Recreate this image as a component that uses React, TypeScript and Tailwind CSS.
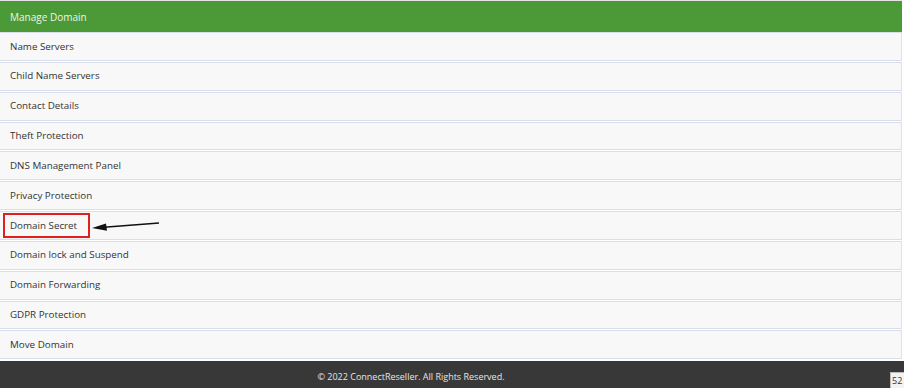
import React from "react";

const items = [
  "Name Servers",
  "Child Name Servers",
  "Contact Details",
  "Theft Protection",
  "DNS Management Panel",
  "Privacy Protection",
  "Domain Secret",
  "Domain lock and Suspend",
  "Domain Forwarding",
  "GDPR Protection",
  "Move Domain",
];

const Arrow = () => (
  <svg width="68" height="10" viewBox="0 0 68 10" className="ml-[2px] mt-[3px]">
    <line x1="12" y1="5.2" x2="67" y2="1" stroke="#111" strokeWidth="1.6" />
    <polygon points="0,6 14,1.5 15,8.8" fill="#111" />
  </svg>
);

export default function App() {
  return (
    <div
      className="w-[904px] h-[388px] overflow-hidden bg-white text-[#333] relative"
      style={{ fontFamily: '"Open Sans", "Noto Sans", sans-serif' }}
    >
      <div className="border-t border-[#e4e4e4] mr-[2px]">
        {/* header */}
        <div className="h-[31px] bg-[#4b9a37] text-[#eef5ea] text-[10px] flex items-center pl-[10px] pt-[1px]">
          Manage Domain
        </div>

        {/* list */}
        <ul>
          {items.map(label => {
            const marked = label === "Domain Secret";
            return (
              <li
                key={label}
                className="h-[28.85px] mb-[1px] bg-[#f8f8f8] border-t border-b border-[#d8dfea] border-r border-r-[#e2e2e2] flex items-center text-[9.8px] pt-[1px]"
              >
                {marked ? (
                  <div className="flex items-center pl-[3px]">
                    <span className="h-[25px] w-[87px] border-2 border-[#e01f1f] pl-[5px] flex items-center">
                      {label}
                    </span>
                    <Arrow />
                  </div>
                ) : (
                  <span className="pl-[10px]">{label}</span>
                )}
              </li>
            );
          })}
        </ul>
      </div>

      {/* footer */}
      <footer className="mt-[2px] h-[40px] bg-[#383838] text-[#e6e6e6] text-[9px] flex justify-center pt-[9px] pr-[82px] relative">
        © 2022 ConnectReseller. All Rights Reserved.
        <span className="absolute right-0 top-[11px] h-[16px] w-[14px] bg-[#f2f2f2] border-l border-t border-[#bbb] text-[9px] text-[#333] leading-[16px] pl-[1px] overflow-hidden">
          52
        </span>
      </footer>
    </div>
  );
}
